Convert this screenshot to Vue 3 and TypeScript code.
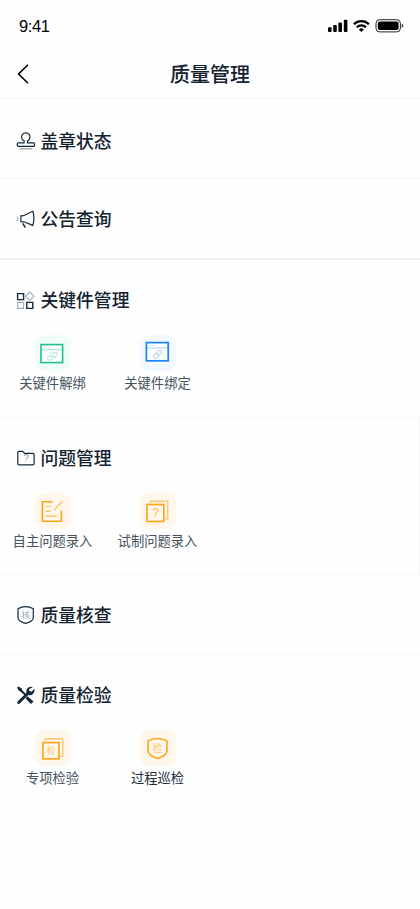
<script setup lang="ts">
type Tone = 'green' | 'blue' | 'orange'

interface Entry {
  label: string
  icon: string
  tone: Tone
  strong?: boolean
}

interface Section {
  title: string
  icon: string
  mod: string
  entries: Entry[]
}

const sections: Section[] = [
  { title: '盖章状态', icon: 'stamp', mod: 'first', entries: [] },
  { title: '公告查询', icon: 'horn', mod: 'thick', entries: [] },
  {
    title: '关键件管理',
    icon: 'grid',
    mod: 'parts',
    entries: [
      { label: '关键件解绑', icon: 'unbind', tone: 'green' },
      { label: '关键件绑定', icon: 'bind', tone: 'blue' },
    ],
  },
  {
    title: '问题管理',
    icon: 'folder',
    mod: 'issues',
    entries: [
      { label: '自主问题录入', icon: 'edit', tone: 'orange' },
      { label: '试制问题录入', icon: 'question', tone: 'orange' },
    ],
  },
  { title: '质量核查', icon: 'shield', mod: 'plain', entries: [] },
  {
    title: '质量检验',
    icon: 'tools',
    mod: 'last',
    entries: [
      { label: '专项检验', icon: 'special', tone: 'orange' },
      { label: '过程巡检', icon: 'patrol', tone: 'orange', strong: true },
    ],
  },
]
</script>

<template>
  <div class="page">
    <header class="top">
      <div class="status">
        <span class="time">9:41</span>
        <svg class="signals" width="76" height="16" viewBox="0 0 76 16">
          <g fill="#000">
            <rect x="0" y="9.2" width="3.6" height="4.8" rx="1" />
            <rect x="5.2" y="7" width="3.6" height="7" rx="1" />
            <rect x="10.4" y="4.4" width="3.6" height="9.6" rx="1" />
            <rect x="15.8" y="1.8" width="3.6" height="12.2" rx="1" />
          </g>
          <g fill="none" stroke="#000" stroke-width="2.3">
            <path d="M25.9 6.3a10.6 10.6 0 0 1 15 0" />
            <path d="M28.8 9.3a6.5 6.5 0 0 1 9.2 0" />
          </g>
          <path d="M33.4 13.9L30.9 11.5a3.7 3.7 0 0 1 5 0z" fill="#000" />
          <rect x="48" y="1.7" width="24.4" height="12.2" rx="3.6" fill="none" stroke="#222" stroke-width="1" />
          <rect x="49.8" y="3.5" width="20.8" height="8.6" rx="2" fill="#000" />
          <path d="M73.8 5.8q1.5.6 1.5 2t-1.5 2z" fill="#333" />
        </svg>
      </div>
      <div class="nav">
        <svg class="back" width="14" height="22" viewBox="0 0 14 22">
          <path d="M12 1.7L2.6 11l9.4 9.3" fill="none" stroke="#000" stroke-width="1.6" />
        </svg>
        <h1>质量管理</h1>
      </div>
    </header>

    <section v-for="s in sections" :key="s.title" class="section" :class="s.mod">
      <div class="heading">
        <svg class="hicon" width="20" height="20" viewBox="0 0 20 20" fill="none" stroke="#13293a" stroke-width="1.2">
          <template v-if="s.icon === 'stamp'">
            <path d="M8.1 11.8V9.9a4.2 4.2 0 1 1 3.4 0v1.9h6q1 0 1 1v1.5q0 1-1 1H2.3q-1 0-1-1v-1.5q0-1 1-1z" />
            <path d="M3.6 17.8h12.6" stroke="#9aa5af" stroke-width="1.3" />
          </template>
          <template v-else-if="s.icon === 'horn'">
            <path d="M1.6 7.4v4.6" stroke="#a3adb5" />
            <path d="M4.9 6.8l2.7-.1L16.8 2.2q1.1 2.4 1.1 7t-1.1 7.2l-9-3.6-2.9-.1z" />
            <path d="M6.8 14.4l2.5 4.2" stroke-width="1.5" />
          </template>
          <template v-else-if="s.icon === 'grid'">
            <path d="M1.6 3.6h6v6h-6zM10.8 12.4h6v6h-6z" stroke-width="1.4" />
            <path d="M1.6 12.4h6v6h-6zM13.7 2l4.2 4.2-4.2 4.2-4.2-4.2z" stroke="#a4adb5" stroke-width="1.1" />
          </template>
          <template v-else-if="s.icon === 'folder'">
            <path d="M1.8 15.5V4.7q0-1.3 1.3-1.3h3.6l2 2h8q1.4 0 1.4 1.3v8.8q0 1.3-1.4 1.3H3.1q-1.3 0-1.3-1.3z" />
            <text x="10" y="14.3" text-anchor="middle" class="glyph" font-size="10" fill="#8f9aa5">?</text>
          </template>
          <template v-else-if="s.icon === 'shield'">
            <path d="M9.7 1.7q4.1 0 7.6 2.1v9q0 3.3-7.6 5.6Q2 16.1 2 12.8v-9q3.6-2.1 7.7-2.1z" />
            <text x="9.8" y="13.4" text-anchor="middle" class="glyph" font-size="8.4" fill="#9ba6af">核</text>
          </template>
          <template v-else>
            <g stroke="none" fill="#13293a">
              <path d="M1.1 2.4l1.4-1 3.3 2.2.5 1.7 5 5-1.3 1.4-5.2-5-1.8-.6z" />
              <path d="M11.7 11.3l5.8 5.1-2.6 2.6-5.3-5.6z" />
              <path d="M17 2.1a5 5 0 0 0-6.7 6L1.5 16.4q-.7 1 .2 2t2.1.2l8.5-8.7a5 5 0 0 0 6.2-6.2l-3.1 3-2-.7-.4-1.8z" />
            </g>
          </template>
        </svg>
        <h2>{{ s.title }}</h2>
      </div>

      <div v-if="s.entries.length" class="entries">
        <div v-for="e in s.entries" :key="e.label" class="entry">
          <div class="tile" :class="e.tone">
            <svg width="36" height="36" viewBox="0 0 36 36" fill="none" stroke="currentColor">
              <template v-if="e.icon === 'unbind'">
                <rect x="6" y="9.6" width="21.6" height="18" fill="#fff" stroke-width="1.6" />
                <g opacity=".35">
                  <path d="M6.6 14.7h20.5" stroke-width="1.2" />
                  <path d="M8.6 12.3h7" stroke-dasharray="1.3 1" />
                  <rect x="12.4" y="21" width="5" height="3.8" rx="1.6" transform="rotate(-20 15 23)" />
                  <rect x="17.3" y="18" width="4.8" height="3.6" rx="1.6" transform="rotate(-40 19.5 19.5)" />
                  <path d="M14 17.2l1.4 2M17 16.5v1.6M20.7 23.2l-2-.4" />
                </g>
              </template>
              <template v-else-if="e.icon === 'bind'">
                <rect x="6.4" y="7.6" width="21.8" height="18.2" fill="#fff" stroke-width="1.7" />
                <g opacity=".35">
                  <path d="M7 12.9h20.5" stroke-width="1" />
                  <path d="M9 10.4h7" stroke-dasharray="1.3 1" />
                  <rect x="13.3" y="19" width="5" height="3.7" rx="1.6" transform="rotate(-42 15.8 20.8)" />
                  <rect x="16.8" y="15.7" width="5" height="3.7" rx="1.6" transform="rotate(-42 19.3 17.5)" />
                </g>
              </template>
              <template v-else-if="e.icon === 'edit'">
                <path d="M17.6 8.7H7.4v19.6h19V17.5" stroke-width="1.6" />
                <path d="M10.7 13.4h5M10.7 18.2h5M10.7 23.2h11.3M19.2 17l8.5-9" stroke-width="1.4" opacity=".6" />
              </template>
              <template v-else-if="e.icon === 'question'">
                <path d="M10 10V8.2h17.7v17.5H25" stroke-width="1.4" opacity=".55" />
                <rect x="7" y="11.5" width="16.8" height="17" stroke-width="1.6" />
                <text x="15.5" y="24.3" text-anchor="middle" class="glyph" font-size="12.5" fill="currentColor" opacity=".75">?</text>
              </template>
              <template v-else-if="e.icon === 'special'">
                <path d="M10.3 11V8.7h17.5v17.5h-2.5" stroke-width="1.4" opacity=".55" />
                <rect x="8" y="12.6" width="16" height="16.3" stroke-width="1.6" />
                <text x="16" y="24.3" text-anchor="middle" class="glyph" font-size="9" fill="currentColor" opacity=".6">检</text>
              </template>
              <template v-else>
                <path d="M17.5 8.5q5.2 0 9.4 2.4v10.3q0 4-9.4 7.3-9.4-3.3-9.4-7.3V10.9Q12.3 8.5 17.5 8.5z" stroke-width="1.6" />
                <text x="17.5" y="22.2" text-anchor="middle" class="glyph" font-size="10" fill="currentColor" opacity=".6">检</text>
              </template>
            </svg>
          </div>
          <span class="label" :class="{ strong: e.strong }">{{ e.label }}</span>
        </div>
      </div>
    </section>
  </div>
</template>

<style>
body {
  background: #fff;
}
</style>

<style scoped>
.page {
  width: 420px;
  height: 909px;
  overflow: hidden;
  background: #fefefe;
  color: #13222f;
  font-family: "Liberation Sans", "Noto Sans CJK SC", sans-serif;
}
.top {
  box-sizing: border-box;
  height: 99px;
  border-bottom: 1px solid #f3f4f5;
}
.status {
  box-sizing: border-box;
  display: flex;
  justify-content: space-between;
  align-items: center;
  height: 50px;
  padding: 2px 16px 0 19px;
}
.time {
  font-size: 16.5px;
  line-height: 20px;
  color: #000;
  letter-spacing: -0.4px;
}
.nav {
  display: grid;
  grid-template-columns: 40px 1fr 40px;
  align-items: center;
  height: 48px;
}
.back {
  margin-left: 16px;
}
h1 {
  margin: 0;
  padding-top: 2px;
  text-align: center;
  font-size: 20px;
  line-height: 28px;
  font-weight: 500;
}
.section {
  box-sizing: border-box;
  height: 80px;
  padding-top: 28px;
  border-bottom: 1px solid #f3f4f5;
}
.section.first {
  padding-top: 30px;
}
.section.thick {
  height: 81px;
  border-bottom-width: 2px;
  border-bottom-color: #f0f1f2;
}
.section.parts {
  height: 158px;
}
.section.issues {
  height: 157px;
  border-right: 1px solid #f3f4f5;
}
.section.last {
  height: 254px;
  border-bottom: 0;
}
.heading {
  display: flex;
  align-items: center;
  gap: 4.5px;
  height: 24px;
  padding-left: 16px;
}
.hicon {
  flex: none;
}
h2 {
  margin: 0;
  padding-top: 2px;
  font-size: 17.8px;
  line-height: 24px;
  font-weight: 500;
}
.entries {
  display: grid;
  grid-template-columns: repeat(4, 105px);
  width: 420px;
  margin-top: 23px;
}
.entry {
  display: flex;
  flex-direction: column;
  align-items: center;
  gap: 3px;
}
.tile {
  width: 36px;
  height: 36px;
  border-radius: 9px;
}
.tile svg {
  display: block;
}
.green {
  background: #f0fcf9;
  color: #20c08a;
}
.blue {
  background: #f2f8ff;
  color: #1684fa;
}
.orange {
  background: #fff7eb;
  color: #ffa313;
}
.label {
  font-size: 13.3px;
  line-height: 20px;
  white-space: nowrap;
  color: #46525d;
}
.label.strong {
  color: #1c2b38;
}
.glyph {
  font-family: "Liberation Sans", "Noto Sans CJK SC", sans-serif;
  stroke: none;
}
</style>
